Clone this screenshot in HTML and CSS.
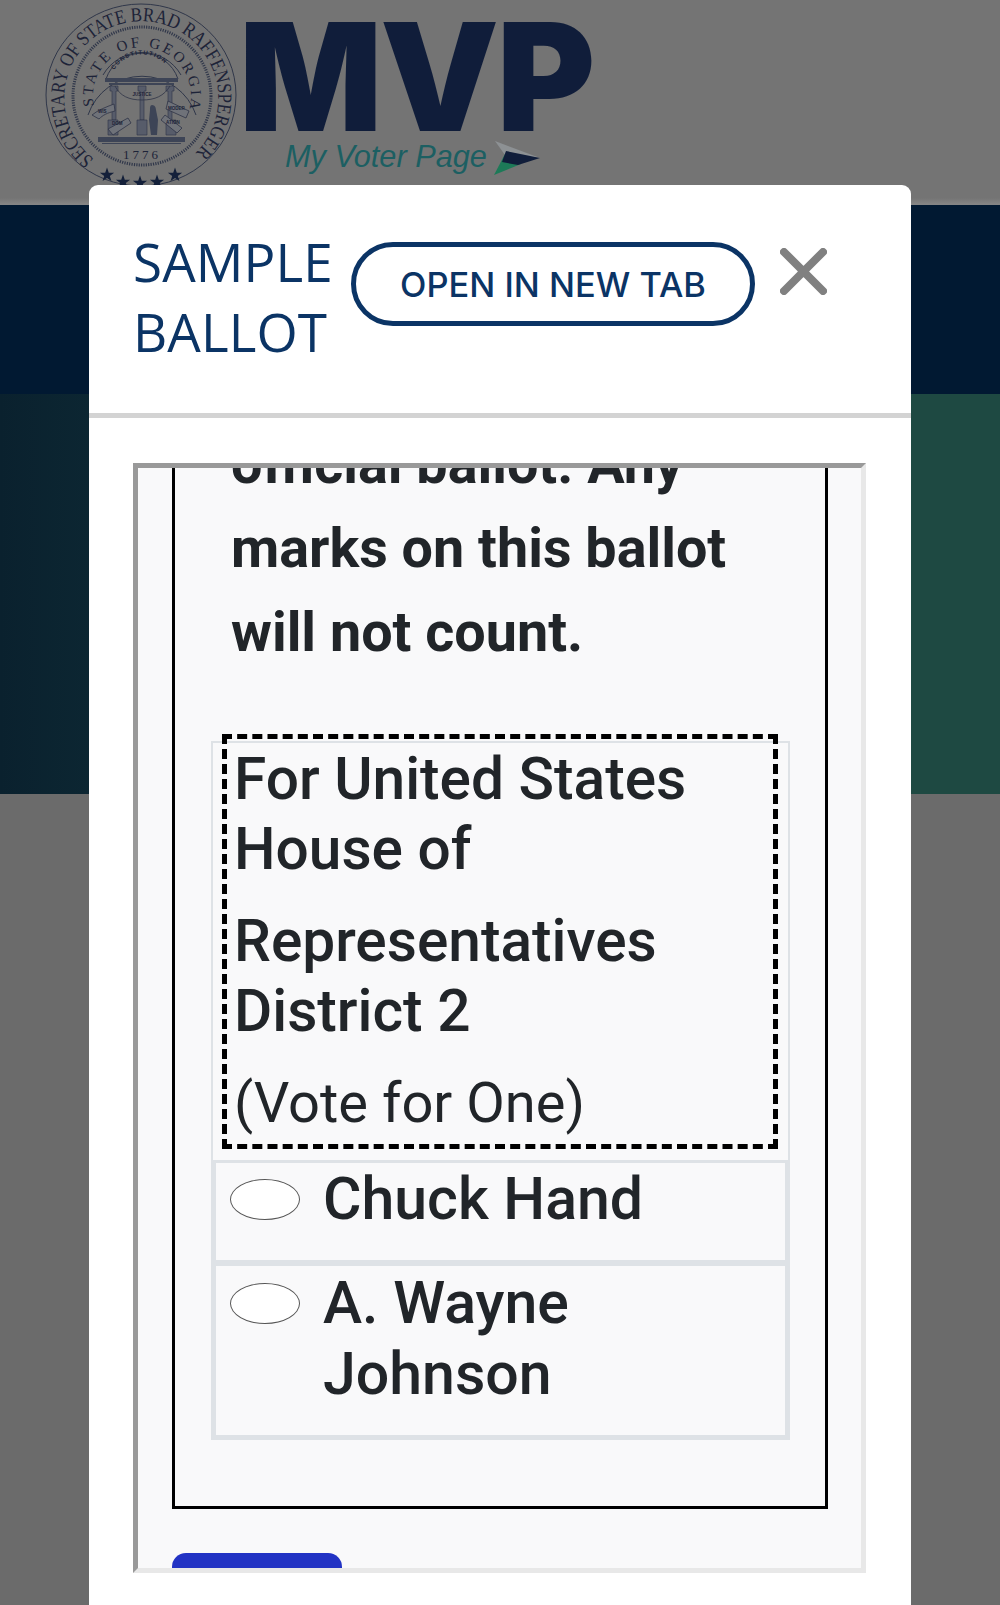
FILE: index.html
```html
<!DOCTYPE html>
<html lang="en">
<head>
<meta charset="utf-8">
<title>My Voter Page - Sample Ballot</title>
<link rel="stylesheet" href="styles.css">
</head>
<body>
<div class="page">
  <header class="site-head">
    <svg class="seal" width="194" height="200" viewBox="0 0 194 200" aria-label="Seal of the Secretary of State of Georgia">
      <defs>
        <path id="outerArc" d="M50 156 A77 77 0 1 1 147 154"/>
        <path id="innerArc" d="M50 103 A49 49 0 1 1 146 103"/>
        <path id="constArc" d="M70 67 A33 33 0 0 1 126 67"/>
        <polygon id="star" points="0,-7.5 1.8,-2.3 7.1,-2.3 2.8,.9 4.4,6.1 0,2.9 -4.4,6.1 -2.8,.9 -7.1,-2.3 -1.8,-2.3"/>
      </defs>
      <ellipse class="ring" cx="97" cy="92" rx="95" ry="91"/>
      <circle class="ring rope" cx="98" cy="93" r="69"/>
      <path class="ring" d="M44 112 A57 57 0 0 1 152 112"/>
      <path class="ring" d="M59 72 A45 45 0 0 1 137 72"/>
      <path class="ring" d="M62 76 A38 38 0 0 1 134 76"/>
      <text class="seal-text outer"><textPath href="#outerArc" textLength="372" lengthAdjust="spacingAndGlyphs">SECRETARY OF STATE BRAD RAFFENSPERGER</textPath></text>
      <text class="seal-text inner"><textPath href="#innerArc" textLength="176">STATE OF GEORGIA</textPath></text>
      <text class="seal-text tiny"><textPath href="#constArc" textLength="58">CONSTITUTION</textPath></text>
      <text class="seal-text year" x="98" y="156" text-anchor="middle">1776</text>
      <g class="temple">
        <path d="M61 75h73v4H61zM65 80h65v2H65z"/>
        <path class="column" d="M66 83h8v5h-2v29h-4V88h-2zM94 83h8v5h-2v29h-4V88h-2zM122 83h8v5h-2v29h-4V88h-2z"/>
        <path class="column" d="M64 117h10v15H64zM93 117h10v15H93zM122 117h10v15h-10z"/>
        <path d="M54 134h87v5H54zM58 140h79v1H58z"/>
        <path d="M108 102c3 0 4 3 4 5l2 10-1 15h-6l-2-15 1-10c0-2 0-5 2-5z"/>
      </g>
      <g class="ribbons">
        <path d="M71 83c5 10 14 14 27 14s22-4 28-14"/>
        <path d="M48 112c6-5 14-8 22-11l1 7c-8 2-12 4-16 8zM64 126l20-11 3 5-18 12zM124 98l21 10-3 7-20-9zM121 112l17 13-5 5-16-13z"/>
      </g>
      <text class="seal-text micro" x="98" y="93" text-anchor="middle">JUSTICE</text>
      <text class="seal-text micro" x="54" y="110">WIS</text>
      <text class="seal-text micro" x="68" y="122">DOM</text>
      <text class="seal-text micro" x="124" y="107">MODER</text>
      <text class="seal-text micro" x="122" y="121">ATION</text>
      <g class="stars">
        <use href="#star" x="63" y="172"/>
        <use href="#star" x="79" y="179"/>
        <use href="#star" x="96" y="180"/>
        <use href="#star" x="113" y="179"/>
        <use href="#star" x="131" y="172"/>
      </g>
    </svg>
    <div class="logo">
      <div class="logo-mark">MVP</div>
      <div class="logo-sub">
        <span class="logo-tag">My Voter Page</span>
        <svg class="logo-arrow" width="50" height="40" viewBox="0 0 50 40" aria-hidden="true">
          <polygon fill="#8d9194" points="4,3 49,20 14,17"/>
          <polygon fill="#1d7a58" points="3,37 14,16 30,26"/>
          <polygon fill="#101d3a" points="15,13 49,20 27,27 11,24"/>
        </svg>
      </div>
    </div>
  </header>
  <div class="band-navy"></div>
  <div class="band-teal"></div>
  <div class="band-rest"></div>

  <section class="modal" role="dialog" aria-label="Sample Ballot">
    <div class="modal-head">
      <h2 class="modal-title">SAMPLE BALLOT</h2>
      <a class="tab-button">OPEN IN NEW TAB</a>
      <svg class="close" width="47" height="47" viewBox="0 0 47 47" aria-label="Close">
        <path d="M4 4 43 43M43 4 4 43"/>
      </svg>
    </div>
    <div class="modal-body">
      <div class="frame">
        <div class="ballot">
          <p class="notice">official ballot. Any marks on this ballot will not count.</p>
          <div class="contest">
            <div class="legend">
              <p class="legend-line">For United States House of</p>
              <p class="legend-line">Representatives District 2</p>
              <p class="legend-vote">(Vote for One)</p>
            </div>
            <div class="option option-first">
              <span class="oval"></span>
              <span class="name">Chuck Hand</span>
            </div>
            <div class="option option-second">
              <span class="oval"></span>
              <span class="name">A. Wayne Johnson</span>
            </div>
          </div>
        </div>
        <div class="next-button"></div>
      </div>
    </div>
  </section>
</div>
</body>
</html>
```
FILE: styles.css
```css
* { box-sizing: border-box; }
html, body { margin: 0; height: 100%; }
body { overflow: hidden; background: #6b6b6b; font-family: Roboto, "Liberation Sans", sans-serif; }
p, h2 { margin: 0; }

.page { position: relative; width: 1000px; height: 1605px; overflow: hidden; display: flex; flex-direction: column; }

.site-head { height: 205px; flex: none; display: flex; gap: 1px; padding: 3px 0 0 44px; overflow: hidden;
  background: linear-gradient(#747474 0, #747474 198px, #858585 204px); }
.seal { flex: none; }
.ring { fill: none; stroke: #30374a; stroke-width: 1; }
.rope { stroke-width: 3; stroke-dasharray: 1.2 1.2; }
.seal-text { font-family: "Liberation Serif", serif; fill: #1d2338; }
.outer { font-size: 20px; }
.inner { font-size: 15px; }
.tiny { font-size: 6px; font-family: "Liberation Sans", sans-serif; font-weight: 700; }
.micro { font-size: 4.5px; font-family: "Liberation Sans", sans-serif; font-weight: 700; }
.year { font-size: 13px; letter-spacing: 3px; }
.temple path { fill: #3d4456; }
.temple .column { fill: #575c6a; stroke: #2e3446; stroke-width: .6; }
.ribbons path { fill: #6f7279; stroke: #2e3446; stroke-width: .8; }
.ribbons path:first-child { fill: none; }
.stars { fill: #14203a; }

.logo { flex: none; }
.logo-mark { font-family: Inter, sans-serif; font-weight: 900; font-size: 150px; line-height: 110px; margin-top: 19px; letter-spacing: -2.5px; color: #101d3a; }
.logo-sub { display: flex; align-items: flex-start; margin: 1px 0 0 46px; gap: 4px; }
.logo-tag { font-family: "Liberation Sans", sans-serif; font-style: italic; font-size: 30.7px; line-height: 38px; margin-top: 5px; color: #1c5f62; }
.logo-arrow { flex: none; margin-top: 5px; }

.band-navy { height: 189px; flex: none; background: #011932; }
.band-teal { height: 400px; flex: none; background: linear-gradient(90deg, #0a212e 0, #0c2632 9%, #1e4942 91%); }
.band-rest { flex: 1; background: #6b6b6b; }

.modal { position: absolute; left: 89px; top: 185px; width: 822px; height: 1440px; background: #fff; border-radius: 9px 9px 0 0; }

.modal-head { height: 233px; display: flex; align-items: flex-start; padding: 47px 0 0 44px; border-bottom: 5px solid #d3d3d3; }
.modal-title { width: 218px; flex: none; margin-top: -5px; font-family: "Open Sans", sans-serif; font-weight: 400; font-size: 53px; line-height: 70px; letter-spacing: .1px; color: #0b3465; }
.tab-button { width: 404px; height: 84px; margin-top: 10px; flex: none; display: flex; align-items: center; justify-content: center; border: 5px solid #0b3465; border-radius: 42px; font-family: Inter, sans-serif; font-weight: 500; font-size: 34.4px; color: #0b3465; }
.close { flex: none; margin: 16px 0 0 25px; }
.close path { fill: none; stroke: #808080; stroke-width: 8; stroke-linecap: round; }

.modal-body { padding: 45px 45px 0 44px; }
.frame { height: 1110px; overflow: hidden; padding: 0 34px; background: #f9f9fa; border-style: solid; border-width: 5px; border-color: #999 #e8e8e8 #e8e8e8 #999; }

.ballot { width: 656px; margin-top: -46px; padding: 0 0 66px 56px; border: 3px solid #000; border-top-width: 0; }
.notice { font-size: 55.7px; font-weight: 700; line-height: 84px; color: #212529; padding-right: 30px; }

.contest { width: 579px; margin: 67px 0 0 -20px; border: 2px solid #dee2e6; }
.legend { margin: -9px 10px 0 9px; padding: 5px 0 5px 7px; border: 5px dashed #000; }
.legend-line { font-size: 58.6px; font-weight: 500; line-height: 70px; color: #212529; margin-bottom: 22px; }
.legend-vote { font-size: 56px; font-weight: 400; line-height: 71px; color: #212529; }

.option { display: flex; align-items: flex-start; gap: 23px; padding: 0 0 0 14px; border: 3px solid #dee2e6; }
.option-first { margin-top: 11px; height: 103px; padding-top: 1px; }
.option-second { height: 175px; padding-top: 2px; }
.oval { flex: none; width: 70px; height: 41px; margin-top: 15px; background: #fff; border: 1px solid #555; border-radius: 50%; }
.name { font-size: 59px; font-weight: 500; line-height: 70.5px; color: #212529; }

.next-button { width: 170px; height: 60px; margin-top: 44px; background: #2233c4; border-radius: 14px; }
```
